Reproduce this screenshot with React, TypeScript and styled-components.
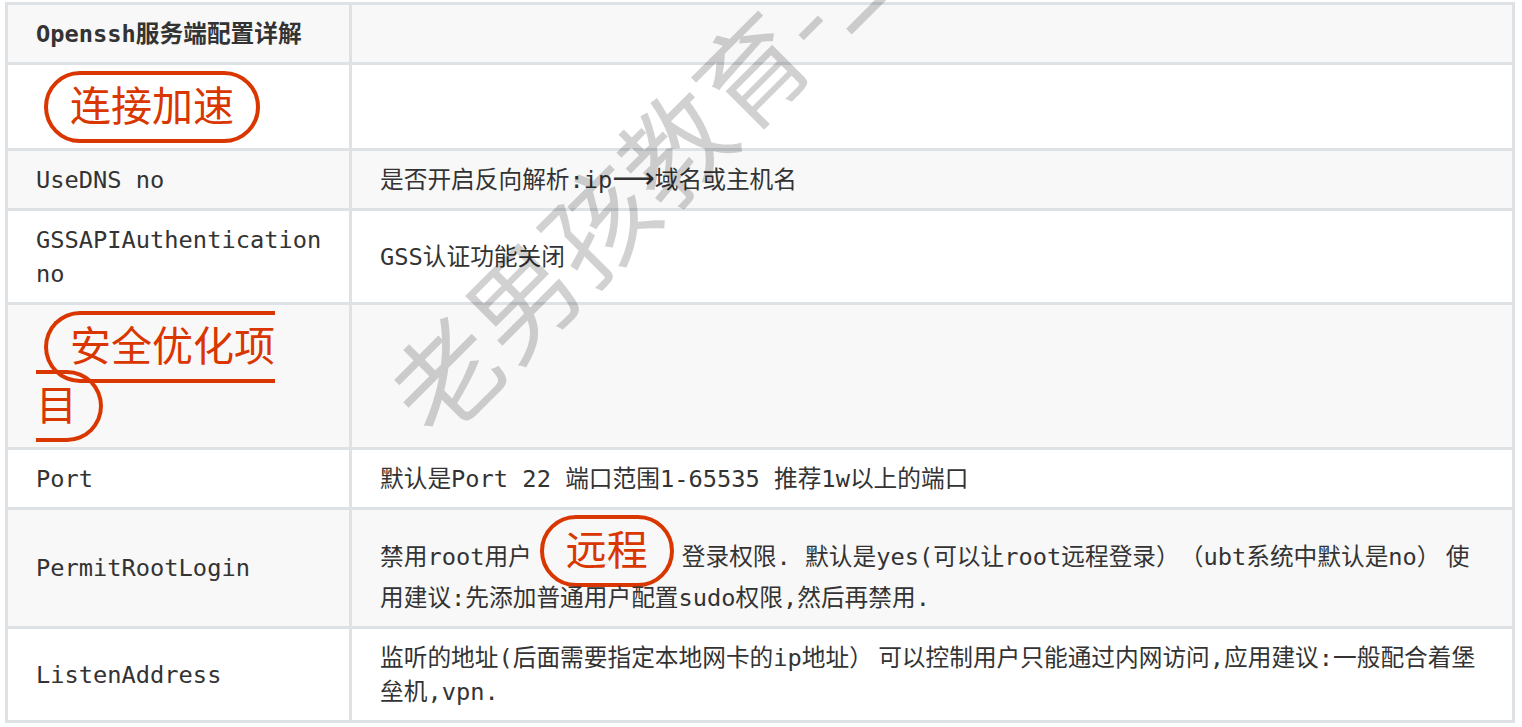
import React from 'react';
import styled, { createGlobalStyle } from 'styled-components';

const GlobalStyle = createGlobalStyle`
  html, body {
    margin: 0;
    padding: 0;
    background: #fff;
    overflow: hidden;
  }
`;

const Page = styled.div`
  position: relative;
  width: 1522px;
  height: 727px;
  padding: 2px 0 0 5px;
  box-sizing: border-box;
  overflow: hidden;
  font-family: "DejaVu Sans Mono", "Noto Sans CJK SC", monospace;
  color: #333;
`;

const ConfigTable = styled.table`
  width: 1510px;
  table-layout: fixed;
  border-collapse: collapse;
  font-size: 23.7px;
  line-height: 34px;
  text-spacing-trim: space-all;
`;

const KeyCol = styled.col`
  width: 344px;
`;

const Row = styled.tr`
  background: #fff;

  &:nth-child(odd) {
    background: #f8f8f8;
  }
`;

const Cell = styled.td<{ $bold?: boolean; $tall?: boolean }>`
  border: 3px solid #dfe2e5;
  padding: ${(p) => (p.$tall ? '13px 28px 11px' : '11.5px 28px')};
  font-weight: ${(p) => (p.$bold ? 700 : 400)};
`;

const Badge = styled.span`
  margin: 0 8px;
  padding: 8px 22px;
  border: 4px solid #d93600;
  border-radius: 36px;
  color: #d93600;
  font-size: 41px;
  line-height: 59px;
`;

const Arrow = styled.span`
  font-family: "DejaVu Sans", sans-serif;
  font-size: 29.7px;
  line-height: 0;
`;

const ThinGap = styled.span`
  word-spacing: -9px;
`;

const Watermark = styled.div`
  position: absolute;
  left: 404px;
  top: 357px;
  font-family: "Noto Sans CJK SC", sans-serif;
  font-size: 108px;
  font-weight: 400;
  line-height: 1;
  white-space: nowrap;
  color: rgba(0, 0, 0, 0.18);
  transform: rotate(-45deg);
  transform-origin: 0 50%;
  pointer-events: none;
`;

const rows = [
  { key: 'Openssh服务端配置详解', head: true, value: null },
  { key: <Badge>连接加速</Badge>, value: null, tall: true },
  { key: 'UseDNS no', value: <>是否开启反向解析:ip<Arrow>⟶</Arrow>域名或主机名</> },
  { key: 'GSSAPIAuthentication no', value: 'GSS认证功能关闭' },
  { key: <Badge>安全优化项目</Badge>, value: null, tall: true },
  { key: 'Port', value: '默认是Port 22 端口范围1-65535 推荐1w以上的端口' },
  {
    key: 'PermitRootLogin',
    value: (
      <>
        禁用root用户<Badge>远程</Badge>登录权限. 默认是yes(可以让root远程登录）（ubt系统中默认是no）<ThinGap> </ThinGap>使用建议:先添加普通用户配置sudo权限,然后再禁用.
      </>
    ),
  },
  {
    key: 'ListenAddress',
    value: (
      <>
        监听的地址(后面需要指定本地网卡的ip地址）<ThinGap> </ThinGap>可以控制用户只能通过内网访问,应用建议:一般配合着堡垒机,vpn.
      </>
    ),
  },
];

export default function App() {
  return (
    <Page>
      <GlobalStyle />
      <ConfigTable>
        <colgroup>
          <KeyCol />
          <col />
        </colgroup>
        <tbody>
          {rows.map((row, i) => (
            <Row key={i}>
              <Cell $bold={row.head} $tall={row.tall}>{row.key}</Cell>
              <Cell>{row.value}</Cell>
            </Row>
          ))}
        </tbody>
      </ConfigTable>
      <Watermark>老男孩教育-上</Watermark>
    </Page>
  );
}
